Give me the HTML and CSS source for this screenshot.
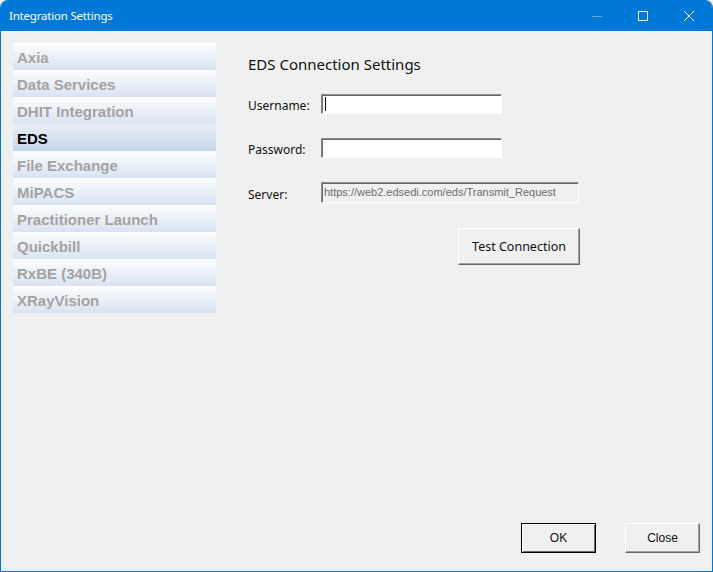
FILE: index.html
```html
<!DOCTYPE html>
<html lang="en">
<head>
  <meta charset="UTF-8">
  <title>Integration Settings</title>
  <link rel="stylesheet" href="styles.css">
</head>
<body>
  <div class="window">
    <div class="titlebar">
      <span class="title">Integration Settings</span>
      <div class="controls">
        <span class="ctl min"><svg width="10" height="10" viewBox="0 0 10 10"><path d="M0 5.5h10" stroke="#5fa6e6" stroke-width="1"/></svg></span>
        <span class="ctl"><svg width="10" height="10" viewBox="0 0 10 10"><rect x="0.5" y="0.5" width="9" height="9" fill="none" stroke="#fff" stroke-width="1"/></svg></span>
        <span class="ctl"><svg width="10" height="10" viewBox="0 0 10 10"><path d="M0 0L10 10M10 0L0 10" stroke="#fff" stroke-width="1"/></svg></span>
      </div>
    </div>

    <div class="content">
      <div class="main">
        <ul class="nav">
          <li>Axia</li>
          <li>Data Services</li>
          <li>DHIT Integration</li>
          <li class="active">EDS</li>
          <li>File Exchange</li>
          <li>MiPACS</li>
          <li>Practitioner Launch</li>
          <li>Quickbill</li>
          <li>RxBE (340B)</li>
          <li>XRayVision</li>
        </ul>

        <div class="panel">
          <h2>EDS Connection Settings</h2>
          <div class="form">
            <label>Username:</label>
            <div class="field"><span class="caret"></span></div>
            <label>Password:</label>
            <div class="field"></div>
            <label>Server:</label>
            <div class="field server">https://web2.edsedi.com/eds/Transmit_Request</div>
          </div>
          <div class="test-row">
            <button class="btn test">Test Connection</button>
          </div>
        </div>
      </div>

      <div class="footer">
        <button class="btn small default">OK</button>
        <button class="btn small">Close</button>
      </div>
    </div>
  </div>
</body>
</html>
```

FILE: styles.css
```css
body {
  margin: 0;
  padding: 0;
  background-color: #f0f0f0;
  font-family: "Noto Sans", "Open Sans", sans-serif;
}
.window {
  width: 713px;
  height: 572px;
  box-sizing: border-box;
  display: flex;
  flex-direction: column;
  background-color: #f0f0f0;
  border: 1px solid #0078d7;
  border-top: none;
  border-radius: 8px 8px 0 0;
  overflow: hidden;
}
.titlebar {
  height: 31px;
  flex-shrink: 0;
  background-color: #0078d7;
  color: white;
  display: flex;
  align-items: center;
  justify-content: space-between;
  padding-left: 8px;
}
.title {
  font-size: 11.5px;
  letter-spacing: -0.2px;
}
.controls {
  display: flex;
  height: 100%;
}
.ctl {
  width: 46px;
  display: flex;
  align-items: center;
  justify-content: center;
}
.content {
  flex: 1;
  display: flex;
  flex-direction: column;
  padding: 12px 11px 18px 12px;
}
.main {
  flex: 1;
  display: flex;
}
.nav {
  list-style: none;
  margin: 0;
  padding: 0;
  width: 203px;
  align-self: flex-start;
}
.nav li {
  height: 27px;
  line-height: 30px;
  padding-left: 4px;
  font-family: "Liberation Sans", Arial, sans-serif;
  font-weight: bold;
  font-size: 15px;
  color: #a3a3a3;
  background: linear-gradient(#fdfeff, #e9eff8 55%, #d8e3f2);
}
.nav li.active {
  color: black;
  background: linear-gradient(#e9eff8, #d6e2f1 55%, #c3d5ea);
}
.panel {
  margin-left: 32px;
  padding-top: 10px;
}
h2 {
  margin: 0 0 19px 0;
  font-size: 15px;
  line-height: 22px;
  font-weight: normal;
  color: #111;
}
.form {
  display: grid;
  grid-template-columns: 73px auto;
  align-items: center;
  row-gap: 24px;
  font-size: 12px;
  color: #111;
}
.form label {
  line-height: 20px;
  position: relative;
  top: 2px;
}
.field {
  width: 181px;
  height: 20px;
  box-sizing: border-box;
  background: white;
  border: 1px solid;
  border-color: #8c8c8c #fff #fff #8c8c8c;
  box-shadow: inset 1px 1px 0 #696969;
  position: relative;
}
.caret {
  position: absolute;
  left: 3px;
  top: 2px;
  width: 1px;
  height: 14px;
  background: black;
}
.field.server {
  width: 258px;
  height: 21px;
  background: #f0f0f0;
  color: #6d6d6d;
  font-family: "Liberation Sans", Arial, sans-serif;
  font-size: 11px;
  line-height: 18px;
  padding-left: 2px;
  white-space: nowrap;
  overflow: hidden;
}
.test-row {
  display: flex;
  justify-content: flex-end;
  margin-top: 25px;
  width: 332px;
}
.btn {
  background: #f0f0f0;
  border: 1px solid;
  border-color: #fff #696969 #696969 #fff;
  box-shadow: inset -1px -1px 0 #a0a0a0;
  font-family: "Noto Sans", "Open Sans", sans-serif;
  color: #111;
  padding: 0;
}
.btn.test {
  width: 122px;
  height: 37px;
  font-size: 12.5px;
}
.footer {
  display: flex;
  justify-content: flex-end;
  gap: 29px;
  padding-right: 1px;
}
.btn.small {
  width: 75px;
  height: 30px;
  font-family: "Liberation Sans", Arial, sans-serif;
  font-size: 12px;
  color: #111;
}
.btn.default {
  border-color: black;
  box-shadow: inset 1px 1px 0 #fff, inset -1px -1px 0 #696969;
}
```
